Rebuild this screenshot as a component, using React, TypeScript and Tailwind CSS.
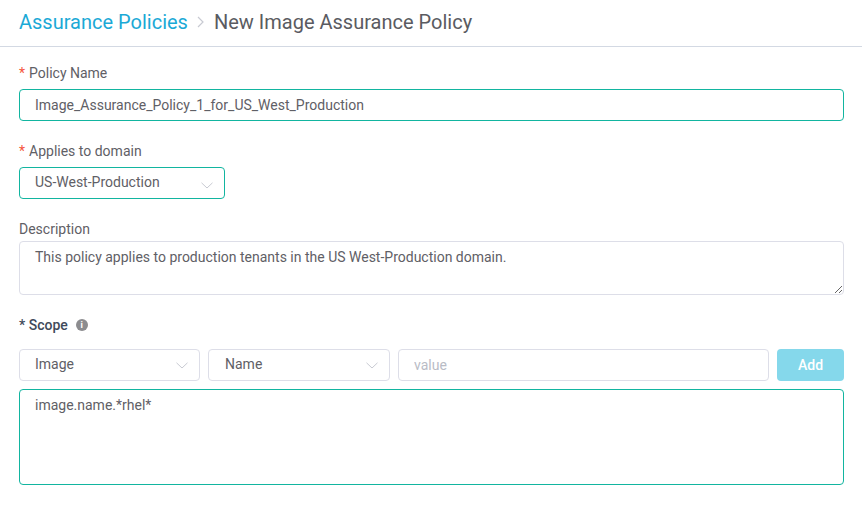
import React from "react";

function Chevron() {
  return (
    <svg width="12" height="7" viewBox="0 0 12 7" fill="none" className="shrink-0">
      <path d="M0.5 0.8l5.5 5.2 5.5-5.2" stroke="#c8cad2" strokeWidth="1" />
    </svg>
  );
}

function Select({ label, className, low, pad }: { label: string; className: string; low?: boolean; pad?: string }) {
  return (
    <div className={`flex h-8 items-center justify-between rounded-[4px] border pr-[11px] ${pad ?? "pl-[15px]"} ${className}`}>
      <span className="-mt-[2px] leading-[20px]">{label}</span>
      <span className={low ? "mt-[5px]" : "mt-[1px]"}><Chevron /></span>
    </div>
  );
}

export default function App() {
  return (
    <div className="h-[506px] w-[862px] overflow-hidden bg-white text-[14px] leading-[20px] text-[#5f6066]" style={{ fontFamily: "Roboto, sans-serif" }}>
      <header className="flex h-[47px] items-center border-b border-[#d3d9e3] pb-[3px] pl-[19px] text-[20px] leading-[24px]">
        <span className="text-[#1ba9d6]">Assurance Policies</span>
        <svg width="8" height="12" viewBox="0 0 8 12" fill="none" className="ml-[9px] mr-[9px] mt-[1px]">
          <path d="M1 1l5 5-5 5" stroke="#c8cad2" strokeWidth="1.2" />
        </svg>
        <span className="text-[#5a5b61]">New Image Assurance Policy</span>
      </header>

      <main className="flex flex-col px-[18px] pl-[19px] pt-[16px]">
        <label className="mb-[6px] block"><span className="mr-[4px] text-[#f5563d]">*</span>Policy Name</label>
        <div className="flex h-8 items-center rounded-[4px] border border-[#12b5a0] pl-[15px]">
          <span className="-mt-[1px]">Image_Assurance_Policy_1_for_US_West_Production</span>
        </div>

        <label className="mb-[6px] mt-[20px] block"><span className="mr-[4px] text-[#f5563d]">*</span>Applies to domain</label>
        <Select label="US-West-Production" low className="w-[206px] border-[#12b5a0]" />

        <label className="mb-[2px] mt-[20px] block">Description</label>
        <textarea
          readOnly
          defaultValue="This policy applies to production tenants in the US West-Production domain."
          className="block h-[54px] w-full rounded-[4px] border border-[#dddee8] px-[15px] pt-[5px] leading-[20px] outline-none"
        />

        <div className="mb-[14px] mt-[20px] flex items-center">
          <span className="font-medium text-[#3f4a5a]">* Scope</span>
          <span className="ml-[8px] flex h-3 w-3 items-center justify-center rounded-full bg-[#8c8c8f] text-[9px] font-bold leading-none text-white">i</span>
        </div>

        <div className="flex gap-2">
          <Select label="Image" className="w-[181px] border-[#dddee8]" />
          <Select label="Name" pad="pl-[16px]" className="w-[182px] border-[#dddee8]" />
          <input
            readOnly
            placeholder="value"
            className="h-8 min-w-0 flex-1 rounded-[4px] border border-[#dddee8] px-[15px] outline-none placeholder:text-[#b9bcc6]"
          />
          <button className="h-8 w-[67px] rounded-[4px] bg-[#85d8eb] font-medium text-white">Add</button>
        </div>

        <div className="mt-2 h-[96px] rounded-[4px] border border-[#12b5a0] pl-[15px] pt-[5px]">image.name.*rhel*</div>
      </main>
    </div>
  );
}
